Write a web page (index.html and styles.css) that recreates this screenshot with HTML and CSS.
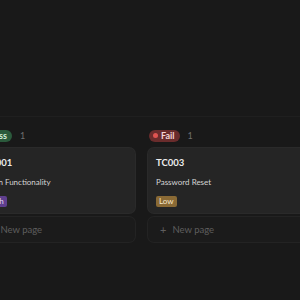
FILE: index.html
```html
<!DOCTYPE html>
<html lang="en">
<head>
<meta charset="UTF-8" />
<meta name="viewport" content="width=device-width, initial-scale=1.0">
<title>Test Cases</title>
<link rel="stylesheet" href="styles.css">
</head>
<body>
<main class="view">
  <div class="board">
    <section class="column">
      <div class="group-head">
        <span class="status pass"><span class="dot"></span>Pass</span>
        <span class="count">1</span>
      </div>
      <div class="card">
        <div class="title">TC001</div>
        <div class="prop">Login Functionality</div>
        <span class="tag high">High</span>
      </div>
      <div class="new-page"><span class="plus">+</span>New page</div>
    </section>
    <section class="column">
      <div class="group-head">
        <span class="status fail"><span class="dot"></span>Fail</span>
        <span class="count">1</span>
      </div>
      <div class="card">
        <div class="title">TC003</div>
        <div class="prop">Password Reset</div>
        <span class="tag low">Low</span>
      </div>
      <div class="new-page"><span class="plus">+</span>New page</div>
    </section>
  </div>
</main>
</body>
</html>
```

FILE: styles.css
```css
body {
  margin: 0;
  background: #191919;
  color: #e6e6e6;
  font-family: Lato, "Open Sans", sans-serif;
  overflow: hidden;
}

.view {
  height: 300px;
  padding-top: 116px;
  box-sizing: border-box;
}

.board {
  display: flex;
  gap: 13px;
  margin-left: -24px;
  padding-top: 12px;
  border-top: 1px solid #1f1f1f;
}

.column {
  width: 159px;
  flex-shrink: 0;
}

.group-head {
  display: flex;
  align-items: center;
  gap: 8px;
  height: 13px;
  margin-bottom: 6px;
  padding-left: 1px;
}

.status {
  display: inline-flex;
  align-items: center;
  gap: 3px;
  height: 12px;
  padding: 0 5px 0 4px;
  border-radius: 7px;
  font-size: 9px;
  font-weight: 700;
}

.status .dot {
  width: 5px;
  height: 5px;
  border-radius: 50%;
}

.pass {
  background: #2b5a3c;
  color: #d5eedb;
}

.pass .dot {
  background: #4fae72;
}

.fail {
  background: #6a2c2c;
  color: #f3d6d6;
}

.fail .dot {
  background: #df5451;
}

.count {
  font-size: 9px;
  color: #6e6e6e;
}

.card {
  background: #252525;
  border-radius: 6px;
  box-shadow: 0 0 0 1px #2a2a2a;
  padding: 8px;
  height: 65px;
  box-sizing: border-box;
}

.title {
  font-size: 9.5px;
  font-weight: 700;
  line-height: 13px;
  color: #ececec;
}

.prop {
  font-size: 8px;
  line-height: 12px;
  margin-top: 7px;
  color: #d4d4d4;
}

.tag {
  display: inline-block;
  margin-top: 3px;
  height: 11px;
  line-height: 11px;
  padding: 0 3px;
  border-radius: 2px;
  font-size: 8px;
}

.high {
  background: #5f3f8e;
  color: #e6dcf5;
}

.low {
  background: #8a6a35;
  color: #f4e7cc;
}

.new-page {
  display: flex;
  align-items: center;
  gap: 6px;
  margin-top: 4px;
  height: 25px;
  padding-left: 12px;
  box-sizing: border-box;
  border-radius: 6px;
  box-shadow: 0 0 0 1px #232323;
  background: #1b1b1b;
  font-size: 9.5px;
  color: #5e5e5e;
}

.plus {
  font-size: 11px;
  line-height: 1;
}
```
